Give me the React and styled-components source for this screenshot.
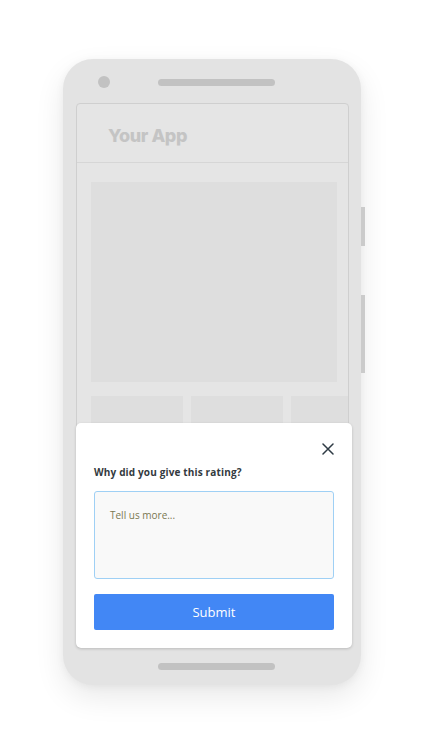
import React, { useState } from 'react';
import styled, { createGlobalStyle } from 'styled-components';

const GlobalStyle = createGlobalStyle`
  body {
    margin: 0;
    background: #ffffff;
    font-family: "Open Sans", "Liberation Sans", sans-serif;
  }
`;

const Page = styled.div`
  width: 432px;
  height: 753px;
  padding: 59px 0 0 63px;
  box-sizing: border-box;
  background: #ffffff;
`;

const Phone = styled.div`
  position: relative;
  width: 298px;
  height: 626px;
  box-sizing: border-box;
  padding: 0 12px 0 13px;
  background: #e3e3e3;
  border-radius: 30px;
  box-shadow: 0 12px 30px rgba(0, 0, 0, 0.09), 0 2px 8px rgba(0, 0, 0, 0.05);
  display: flex;
  flex-direction: column;
`;

const TopBar = styled.div`
  height: 44px;
  display: flex;
  align-items: center;
  padding-top: 2px;
  box-sizing: border-box;
`;

const Camera = styled.div`
  width: 12px;
  height: 12px;
  border-radius: 50%;
  background: #c2c2c2;
  margin-left: 22px;
  margin-right: 48px;
`;

const Speaker = styled.div`
  width: 117px;
  height: 7px;
  border-radius: 4px;
  background: #c2c2c2;
`;

const Screen = styled.div`
  height: 545px;
  box-sizing: border-box;
  border: 1px solid #cfcfcf;
  border-radius: 4px;
  background: #e5e5e5;
  overflow: hidden;
`;

const Header = styled.div`
  height: 59px;
  box-sizing: border-box;
  border-bottom: 1px solid #d6d6d6;
  display: flex;
  align-items: center;
  padding: 4px 0 0 31px;
  font-family: Inter, "Liberation Sans", sans-serif;
  font-weight: 800;
  font-size: 18px;
  letter-spacing: -0.4px;
  color: #c4c4c4;
`;

const Content = styled.div`
  padding: 19px 0 0 14px;
  display: flex;
  flex-direction: column;
  gap: 14px;
`;

const Hero = styled.div`
  width: 246px;
  height: 200px;
  background: #dedede;
`;

const ThumbRow = styled.div`
  display: flex;
  gap: 8px;
`;

const Thumb = styled.div`
  flex: 0 0 92px;
  height: 60px;
  background: #dedede;
`;

const BottomBar = styled.div`
  flex: 1;
  display: flex;
  align-items: center;
  justify-content: center;
  padding-left: 8px;
`;

const SideButton = styled.div`
  position: absolute;
  right: -4px;
  top: ${(p) => p.top}px;
  width: 4px;
  height: ${(p) => p.h}px;
  background: #cbcbcb;
`;

const Sheet = styled.div`
  position: absolute;
  left: 13px;
  top: 364px;
  width: 276px;
  height: 225px;
  box-sizing: border-box;
  background: #ffffff;
  border-radius: 5px;
  box-shadow: 0 1px 3px rgba(0, 0, 0, 0.18);
  padding: 16px 18px 18px 18px;
  display: flex;
  flex-direction: column;
`;

const CloseRow = styled.div`
  display: flex;
  justify-content: flex-end;
  height: 20px;
  margin-right: -4px;
`;

const CloseButton = styled.button`
  border: none;
  background: none;
  padding: 0;
  width: 20px;
  height: 20px;
  display: flex;
  align-items: center;
  justify-content: center;
  cursor: pointer;
`;

const Title = styled.div`
  margin-top: 6px;
  font-size: 10px;
  font-weight: 700;
  letter-spacing: 0.15px;
  color: #333a40;
  line-height: 14px;
`;

const TextArea = styled.textarea`
  margin-top: 12px;
  width: 240px;
  height: 88px;
  box-sizing: border-box;
  resize: none;
  border: 1px solid #9fd0f5;
  border-radius: 3px;
  background: #f9f9f9;
  padding: 16px 15px;
  font-family: "Open Sans", "Liberation Sans", sans-serif;
  font-size: 10px;
  outline: none;

  &::placeholder {
    color: #7a7852;
    opacity: 1;
  }
`;

const Submit = styled.button`
  margin-top: 15px;
  width: 240px;
  height: 36px;
  border: none;
  border-radius: 2px;
  background: #4287f5;
  color: #ffffff;
  font-family: "Open Sans", "Liberation Sans", sans-serif;
  font-size: 13px;
  cursor: pointer;
`;

function App() {
  const [text, setText] = useState('');

  return (
    <Page>
      <GlobalStyle />
      <Phone>
        <TopBar>
          <Camera />
          <Speaker />
        </TopBar>
        <Screen>
          <Header>Your App</Header>
          <Content>
            <Hero />
            <ThumbRow>
              <Thumb />
              <Thumb />
              <Thumb />
            </ThumbRow>
          </Content>
        </Screen>
        <BottomBar>
          <Speaker />
        </BottomBar>
        <SideButton top={148} h={39} />
        <SideButton top={236} h={78} />
        <Sheet>
          <CloseRow>
            <CloseButton aria-label="Close">
              <svg width="12" height="12" viewBox="0 0 12 12">
                <path d="M1 1 L11 11 M11 1 L1 11" stroke="#2f3b45" strokeWidth="1.5" strokeLinecap="round" />
              </svg>
            </CloseButton>
          </CloseRow>
          <Title>Why did you give this rating?</Title>
          <TextArea
            placeholder="Tell us more..."
            value={text}
            onChange={(e) => setText(e.target.value)}
          />
          <Submit>Submit</Submit>
        </Sheet>
      </Phone>
    </Page>
  );
}

export default App;
